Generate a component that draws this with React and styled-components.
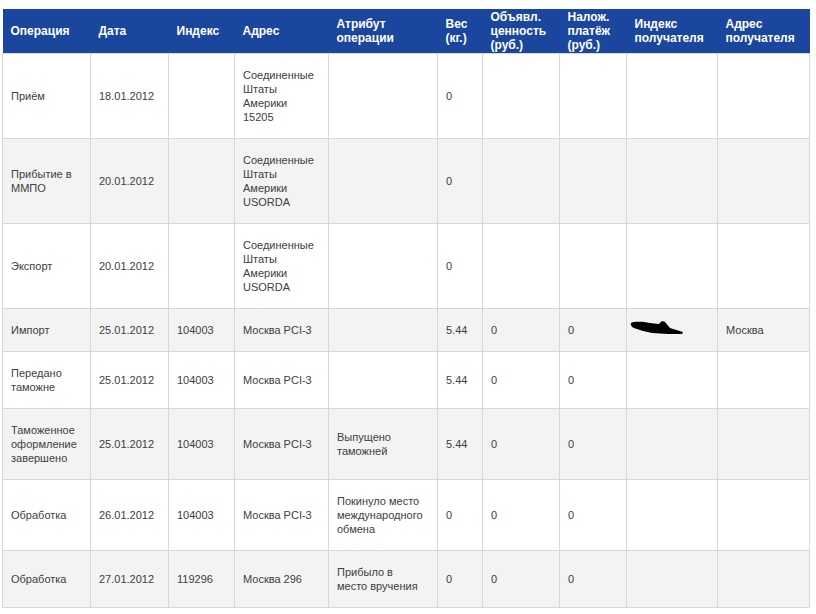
import styled, { createGlobalStyle } from "styled-components";

const GlobalStyle = createGlobalStyle`
  body {
    margin: 0;
    background: #fff;
    font-family: "Liberation Sans", Arial, sans-serif;
  }
`;

const Page = styled.div`
  padding: 9px 0 0 2px;
`;

const Table = styled.table`
  border-collapse: collapse;
  table-layout: fixed;
  width: 808px;
  font-size: 11px;
  line-height: 14px;
  color: #404040;
`;

const HeadCell = styled.th`
  background: #1b469e;
  color: #fff;
  font-size: 12px;
  font-weight: bold;
  text-align: left;
  vertical-align: middle;
  line-height: 14px;
  padding: 1px 8px;
  height: 42px;
`;

const Row = styled.tr`
  background: ${(p) => (p.$striped ? "#f3f3f4" : "#ffffff")};
`;

const Cell = styled.td`
  border: 1px solid #d8d8d8;
  padding: 14px 8px;
  vertical-align: middle;
  text-align: left;
  white-space: nowrap;
`;

const Scribble = styled.svg`
  display: block;
  margin-left: -5px;
  margin-top: -4px;
`;

const widths = [88, 78, 66, 94, 109, 45, 77, 67, 91, 92];

const headers = [
  ["Операция"],
  ["Дата"],
  ["Индекс"],
  ["Адрес"],
  ["Атрибут", "операции"],
  ["Вес", "(кг.)"],
  ["Объявл.", "ценность", "(руб.)"],
  ["Налож.", "платёж", "(руб.)"],
  ["Индекс", "получателя"],
  ["Адрес", "получателя"],
];

const usa = (code) => ["Соединенные", "Штаты", "Америки", code];

const rows = [
  [["Приём"], ["18.01.2012"], [], usa("15205"), [], ["0"], [], [], [], []],
  [["Прибытие в", "ММПО"], ["20.01.2012"], [], usa("USORDA"), [], ["0"], [], [], [], []],
  [["Экспорт"], ["20.01.2012"], [], usa("USORDA"), [], ["0"], [], [], [], []],
  [["Импорт"], ["25.01.2012"], ["104003"], ["Москва PCI-3"], [], ["5.44"], ["0"], ["0"], "blob", ["Москва"]],
  [["Передано", "таможне"], ["25.01.2012"], ["104003"], ["Москва PCI-3"], [], ["5.44"], ["0"], ["0"], [], []],
  [["Таможенное", "оформление", "завершено"], ["25.01.2012"], ["104003"], ["Москва PCI-3"], ["Выпущено", "таможней"], ["5.44"], ["0"], ["0"], [], []],
  [["Обработка"], ["26.01.2012"], ["104003"], ["Москва PCI-3"], ["Покинуло место", "международного", "обмена"], ["0"], ["0"], ["0"], [], []],
  [["Обработка"], ["27.01.2012"], ["119296"], ["Москва 296"], ["Прибыло в", "место вручения"], ["0"], ["0"], ["0"], [], []],
];

const Lines = ({ lines }) =>
  lines.map((line, i) => (
    <span key={i}>
      {i > 0 && <br />}
      {line}
    </span>
  ));

// hand-drawn redaction mark over the recipient index
const Blob = () => (
  <Scribble width="54" height="16" viewBox="0 0 54 16">
    <path
      d="M1,3 C5,1 14,2 20,3 L29,4 L32,1 L35,2 L40,8 L53,12 L52,14 L38,14 L22,13 L13,11 L7,9 C2,8 0,5 1,3 Z"
      fill="#000"
    />
  </Scribble>
);

export default function App() {
  return (
    <Page>
      <GlobalStyle />
      <Table>
        <colgroup>
          {widths.map((w, i) => (
            <col key={i} style={{ width: w }} />
          ))}
        </colgroup>
        <thead>
          <tr>
            {headers.map((h, i) => (
              <HeadCell key={i}>
                <Lines lines={h} />
              </HeadCell>
            ))}
          </tr>
        </thead>
        <tbody>
          {rows.map((r, i) => (
            <Row key={i} $striped={i % 2 === 1}>
              {r.map((c, j) => (
                <Cell key={j}>{c === "blob" ? <Blob /> : <Lines lines={c} />}</Cell>
              ))}
            </Row>
          ))}
        </tbody>
      </Table>
    </Page>
  );
}
